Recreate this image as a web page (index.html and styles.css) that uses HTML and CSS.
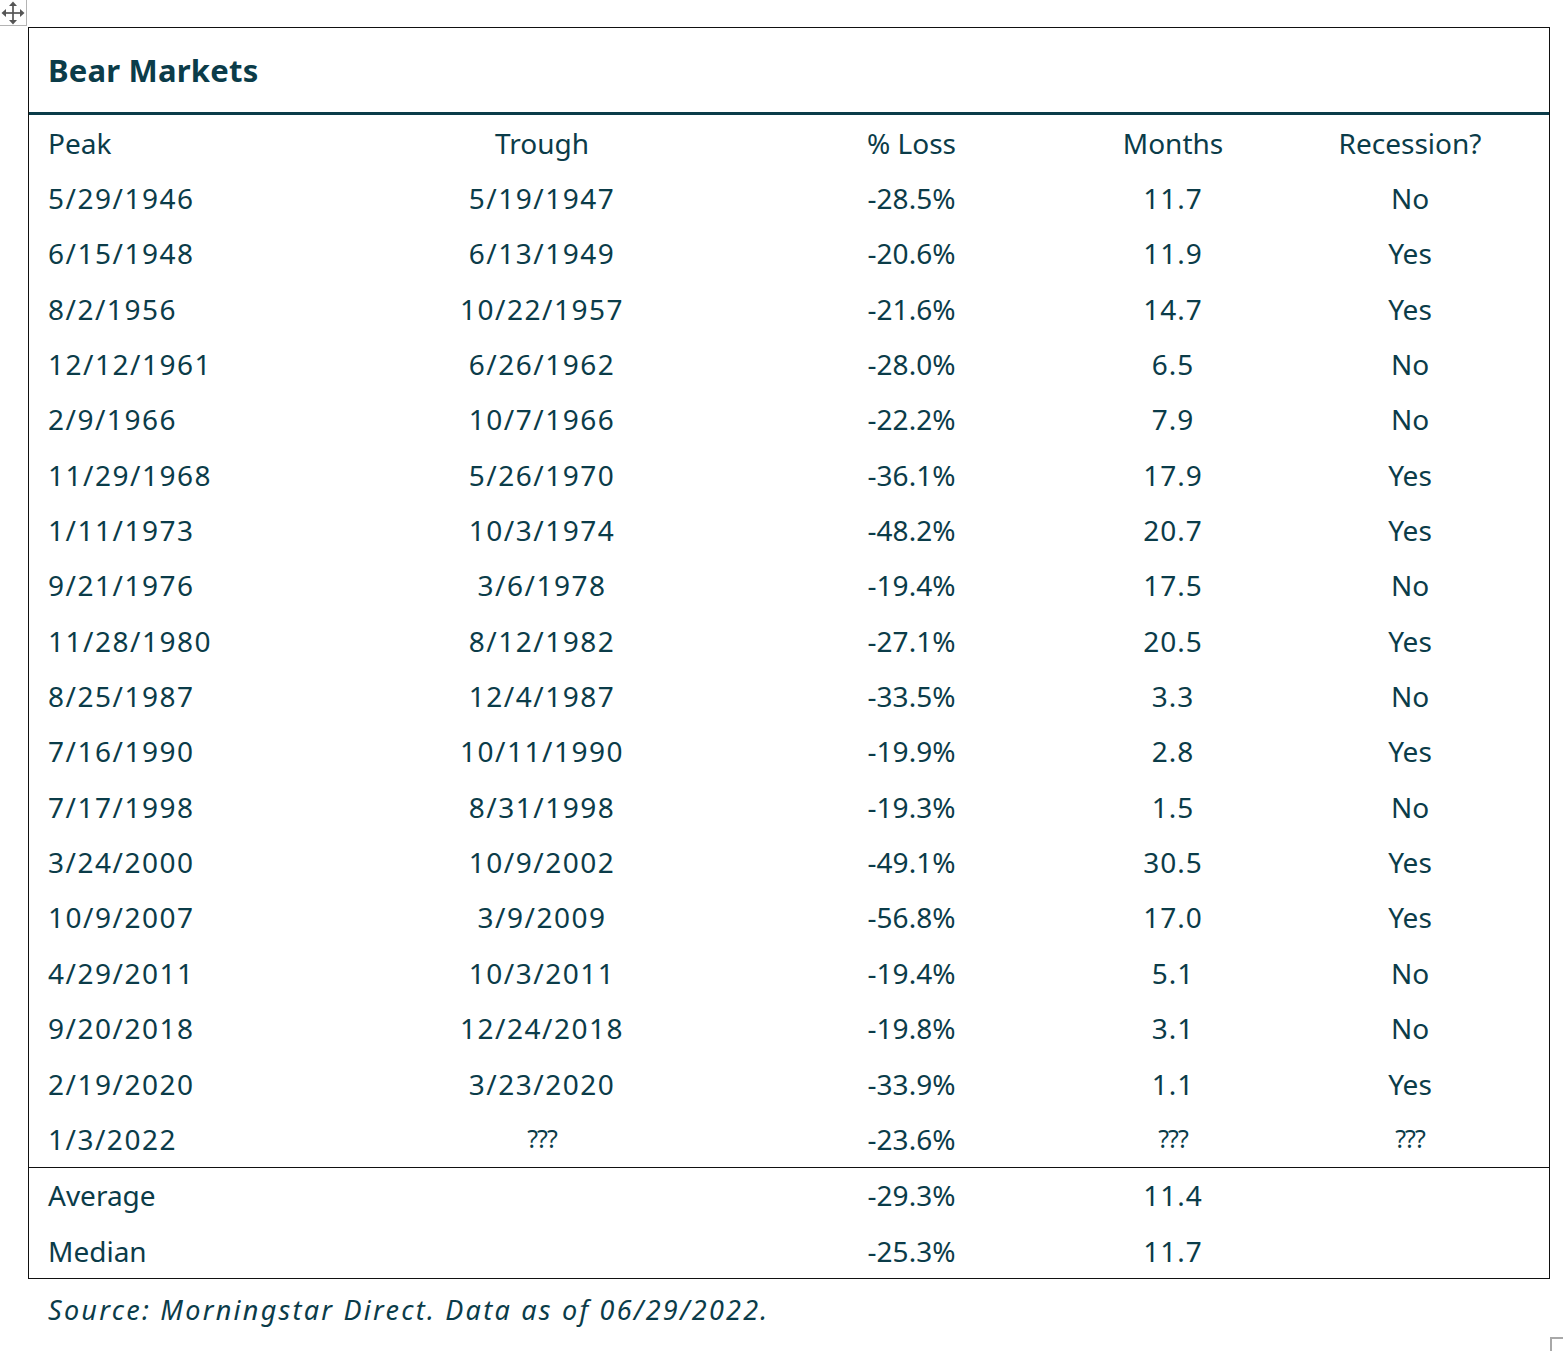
FILE: index.html
```html
<!DOCTYPE html>
<html lang="en">
<head>
<meta charset="utf-8">
<title>Bear Markets</title>
<link rel="stylesheet" href="styles.css">
</head>
<body>
<div class="handle">
  <svg width="24" height="24" viewBox="0 0 24 24" aria-hidden="true">
    <g stroke="#555" stroke-width="1.7" fill="none">
      <line x1="12" y1="3" x2="12" y2="21"/>
      <line x1="3" y1="12" x2="21" y2="12"/>
    </g>
    <g fill="#555">
      <polygon points="12,0.5 8,5 16,5"/>
      <polygon points="12,23.5 8,19 16,19"/>
      <polygon points="0.5,12 5,8 5,16"/>
      <polygon points="23.5,12 19,8 19,16"/>
    </g>
  </svg>
</div>
<div class="page">
  <div class="table">
    <div class="title">Bear Markets</div>
    <div class="rows">
      <div class="row head"><span class="c1">Peak</span><span>Trough</span><span>% Loss</span><span>Months</span><span>Recession?</span></div>
      <div class="row"><span class="c1 d">5/29/1946</span><span class="d">5/19/1947</span><span>-28.5%</span><span class="m">11.7</span><span>No</span></div>
      <div class="row"><span class="c1 d">6/15/1948</span><span class="d">6/13/1949</span><span>-20.6%</span><span class="m">11.9</span><span>Yes</span></div>
      <div class="row"><span class="c1 d">8/2/1956</span><span class="d">10/22/1957</span><span>-21.6%</span><span class="m">14.7</span><span>Yes</span></div>
      <div class="row"><span class="c1 d">12/12/1961</span><span class="d">6/26/1962</span><span>-28.0%</span><span class="m">6.5</span><span>No</span></div>
      <div class="row"><span class="c1 d">2/9/1966</span><span class="d">10/7/1966</span><span>-22.2%</span><span class="m">7.9</span><span>No</span></div>
      <div class="row"><span class="c1 d">11/29/1968</span><span class="d">5/26/1970</span><span>-36.1%</span><span class="m">17.9</span><span>Yes</span></div>
      <div class="row"><span class="c1 d">1/11/1973</span><span class="d">10/3/1974</span><span>-48.2%</span><span class="m">20.7</span><span>Yes</span></div>
      <div class="row"><span class="c1 d">9/21/1976</span><span class="d">3/6/1978</span><span>-19.4%</span><span class="m">17.5</span><span>No</span></div>
      <div class="row"><span class="c1 d">11/28/1980</span><span class="d">8/12/1982</span><span>-27.1%</span><span class="m">20.5</span><span>Yes</span></div>
      <div class="row"><span class="c1 d">8/25/1987</span><span class="d">12/4/1987</span><span>-33.5%</span><span class="m">3.3</span><span>No</span></div>
      <div class="row"><span class="c1 d">7/16/1990</span><span class="d">10/11/1990</span><span>-19.9%</span><span class="m">2.8</span><span>Yes</span></div>
      <div class="row"><span class="c1 d">7/17/1998</span><span class="d">8/31/1998</span><span>-19.3%</span><span class="m">1.5</span><span>No</span></div>
      <div class="row"><span class="c1 d">3/24/2000</span><span class="d">10/9/2002</span><span>-49.1%</span><span class="m">30.5</span><span>Yes</span></div>
      <div class="row"><span class="c1 d">10/9/2007</span><span class="d">3/9/2009</span><span>-56.8%</span><span class="m">17.0</span><span>Yes</span></div>
      <div class="row"><span class="c1 d">4/29/2011</span><span class="d">10/3/2011</span><span>-19.4%</span><span class="m">5.1</span><span>No</span></div>
      <div class="row"><span class="c1 d">9/20/2018</span><span class="d">12/24/2018</span><span>-19.8%</span><span class="m">3.1</span><span>No</span></div>
      <div class="row"><span class="c1 d">2/19/2020</span><span class="d">3/23/2020</span><span>-33.9%</span><span class="m">1.1</span><span>Yes</span></div>
      <div class="row"><span class="c1 d">1/3/2022</span><span class="q">???</span><span>-23.6%</span><span class="q">???</span><span class="q">???</span></div>
    </div>
    <div class="rows summary">
      <div class="row"><span class="c1">Average</span><span></span><span>-29.3%</span><span class="m">11.4</span><span></span></div>
      <div class="row"><span class="c1">Median</span><span></span><span>-25.3%</span><span class="m">11.7</span><span></span></div>
    </div>
  </div>
  <p class="source">Source: Morningstar Direct. Data as of 06/29/2022.</p>
</div>
<div class="corner"></div>
</body>
</html>
```

FILE: styles.css
```css
html, body {
  margin: 0;
  padding: 0;
  background: #ffffff;
}

body {
  width: 1563px;
  height: 1351px;
  position: relative;
  overflow: hidden;
  font-family: "Noto Sans", "Open Sans", sans-serif;
  color: #0b3c49;
}

.handle {
  position: absolute;
  left: 0;
  top: 0;
  width: 26px;
  height: 25px;
  border-right: 1px solid #b4b4b4;
  border-bottom: 1px solid #b4b4b4;
  display: flex;
  align-items: center;
  justify-content: center;
}

.page {
  padding: 27px 0 0 28px;
}

.table {
  width: 1520px;
  border: 1px solid #111;
}

.title {
  height: 87px;
  box-sizing: border-box;
  padding-left: 19px;
  display: flex;
  align-items: center;
  font-weight: 700;
  font-size: 31px;
  letter-spacing: 0.2px;
  border-bottom: 3px solid #0b3c49;
  padding-bottom: 1px;
}

.rows {
  display: flex;
  flex-direction: column;
}

.summary {
  border-top: 1px solid #111;
}

.row {
  display: grid;
  grid-template-columns: 300px 426px 313px 210px 264px 7px;
  height: 55.35px;
  align-items: center;
  font-size: 28px;
  line-height: 1;
}

.row span {
  text-align: center;
  white-space: nowrap;
}

.row .c1 {
  text-align: left;
  padding-left: 19px;
}

.d {
  letter-spacing: 1.5px;
}

.m {
  letter-spacing: 1px;
}

.q {
  font-size: 25px;
  letter-spacing: -1px;
}

.source {
  margin: 12px 0 0 20px;
  font-style: italic;
  font-size: 27px;
  letter-spacing: 2.25px;
}

.corner {
  position: absolute;
  left: 1550px;
  top: 1337px;
  width: 14px;
  height: 14px;
  border-left: 2px solid #a8a8a8;
  border-top: 2px solid #a8a8a8;
}
```
